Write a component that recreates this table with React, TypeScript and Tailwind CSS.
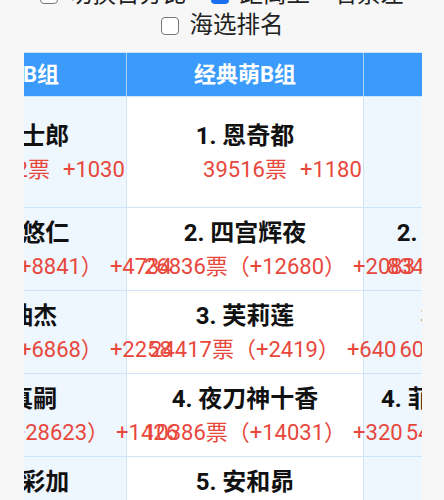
import React from 'react';

type Entry = { name: string; votes: string; gap: string };

const headers = ['新番萌B组', '经典萌B组', '经典萌C组'];

const rows: Entry[][] = [
  [
    { name: '1. 卫宫士郎', votes: '40712票', gap: '+1030' },
    { name: '1. 恩奇都', votes: '39516票', gap: '+1180' },
    { name: '1. 夏娜', votes: '41608票', gap: '' },
  ],
  [
    { name: '2. 虎杖悠仁', votes: '38472票（+8841）', gap: '+4734' },
    { name: '2. 四宫辉夜', votes: '26836票（+12680）', gap: '+2083' },
    { name: '2. 五河琴里妹妹', votes: '83418票（+5210）', gap: '' },
  ],
  [
    { name: '3. 夏油杰', votes: '36214票（+6868）', gap: '+2258' },
    { name: '3. 芙莉莲', votes: '24417票（+2419）', gap: '+640' },
    { name: '3. 和泉纱雾', votes: '6052票（+310）', gap: '' },
  ],
  [
    { name: '4. 碇真嗣', votes: '33956票（+28623）', gap: '+1426' },
    { name: '4. 夜刀神十香', votes: '10386票（+14031）', gap: '+320' },
    { name: '4. 菲特·泰斯特罗莎', votes: '5417票（+86）', gap: '' },
  ],
  [
    { name: '5. 户冢彩加', votes: '31698票（+4120）', gap: '+905' },
    { name: '5. 安和昴', votes: '10066票（+3512）', gap: '+210' },
    { name: '5. 夏娜', votes: '5203票（+41）', gap: '' },
  ],
];

function Box({ checked }: { checked?: boolean }) {
  if (checked) {
    return (
      <span className="w-[18px] h-[18px] rounded-[4px] bg-[#1a6ff0] flex items-center justify-center shrink-0">
        <svg width="12" height="12" viewBox="0 0 12 12" fill="none">
          <path d="M2 6.2l2.6 2.6L10 3.4" stroke="#fff" strokeWidth="2" strokeLinecap="round" strokeLinejoin="round" />
        </svg>
      </span>
    );
  }
  return <span className="w-[18px] h-[18px] rounded-[4px] border-[1.5px] border-[#777] bg-white shrink-0" />;
}

function Option({ label, checked }: { label: string; checked?: boolean }) {
  return (
    <label className="flex items-center gap-[11px]">
      <Box checked={checked} />
      <span>{label}</span>
    </label>
  );
}

function Cell({ e, col, first }: { e: Entry; col: number; first: boolean }) {
  const bg = col === 1 ? 'bg-white' : 'bg-[#eef6fe]';
  const pad = first ? 'pt-[22px] pb-[20px]' : 'pt-[8px] pb-[6px]';
  return (
    <div className={`${bg} ${pad} border-r border-b border-[#cfe4f9]`}>
      <div className="text-center whitespace-nowrap font-bold text-[24px] leading-[34px] text-[#111]">{e.name}</div>
      <div className="text-center whitespace-nowrap text-[22px] leading-[34px] text-[#e8473c]">
        <span className="relative inline-block">
          {e.votes}
          {e.gap && (
            <span className={`absolute left-full top-0 ${first ? 'ml-[13px]' : 'ml-[7px]'}`}>{e.gap}</span>
          )}
        </span>
      </div>
    </div>
  );
}

export default function App() {
  return (
    <div className="min-h-screen bg-[#f7f7f7] overflow-hidden font-[Roboto,'Noto_Sans_CJK_SC',sans-serif]">
      {/* Options (page is scrolled, first line cut) */}
      <div className="mt-[-21px] flex flex-wrap justify-center gap-x-6 text-[23.5px] leading-[31px] text-[#222]">
        <Option label="切换百分比" />
        <Option label="距离上一名票差" checked />
        <Option label="海选排名" />
      </div>

      {/* Ranking table, scrolled sideways */}
      <div className="mt-[11px] ml-[24px] w-[398px] overflow-hidden">
        <div className="ml-[-134px] w-[711px]">
          <div className="grid grid-cols-[237px_237px_237px] bg-[#3a9bfc] border-t border-b border-[#cfe4f9]">
            {headers.map((h, i) => (
              <div
                key={i}
                className="h-[43px] flex items-center justify-center border-r border-[#a9d1fb] text-white font-bold text-[22px] whitespace-nowrap"
              >
                {h}
              </div>
            ))}
          </div>
          {rows.map((r, ri) => (
            <div key={ri} className="grid grid-cols-[237px_237px_237px]">
              {r.map((e, ci) => (
                <Cell key={ci} e={e} col={ci} first={ri === 0} />
              ))}
            </div>
          ))}
        </div>
      </div>
    </div>
  );
}
